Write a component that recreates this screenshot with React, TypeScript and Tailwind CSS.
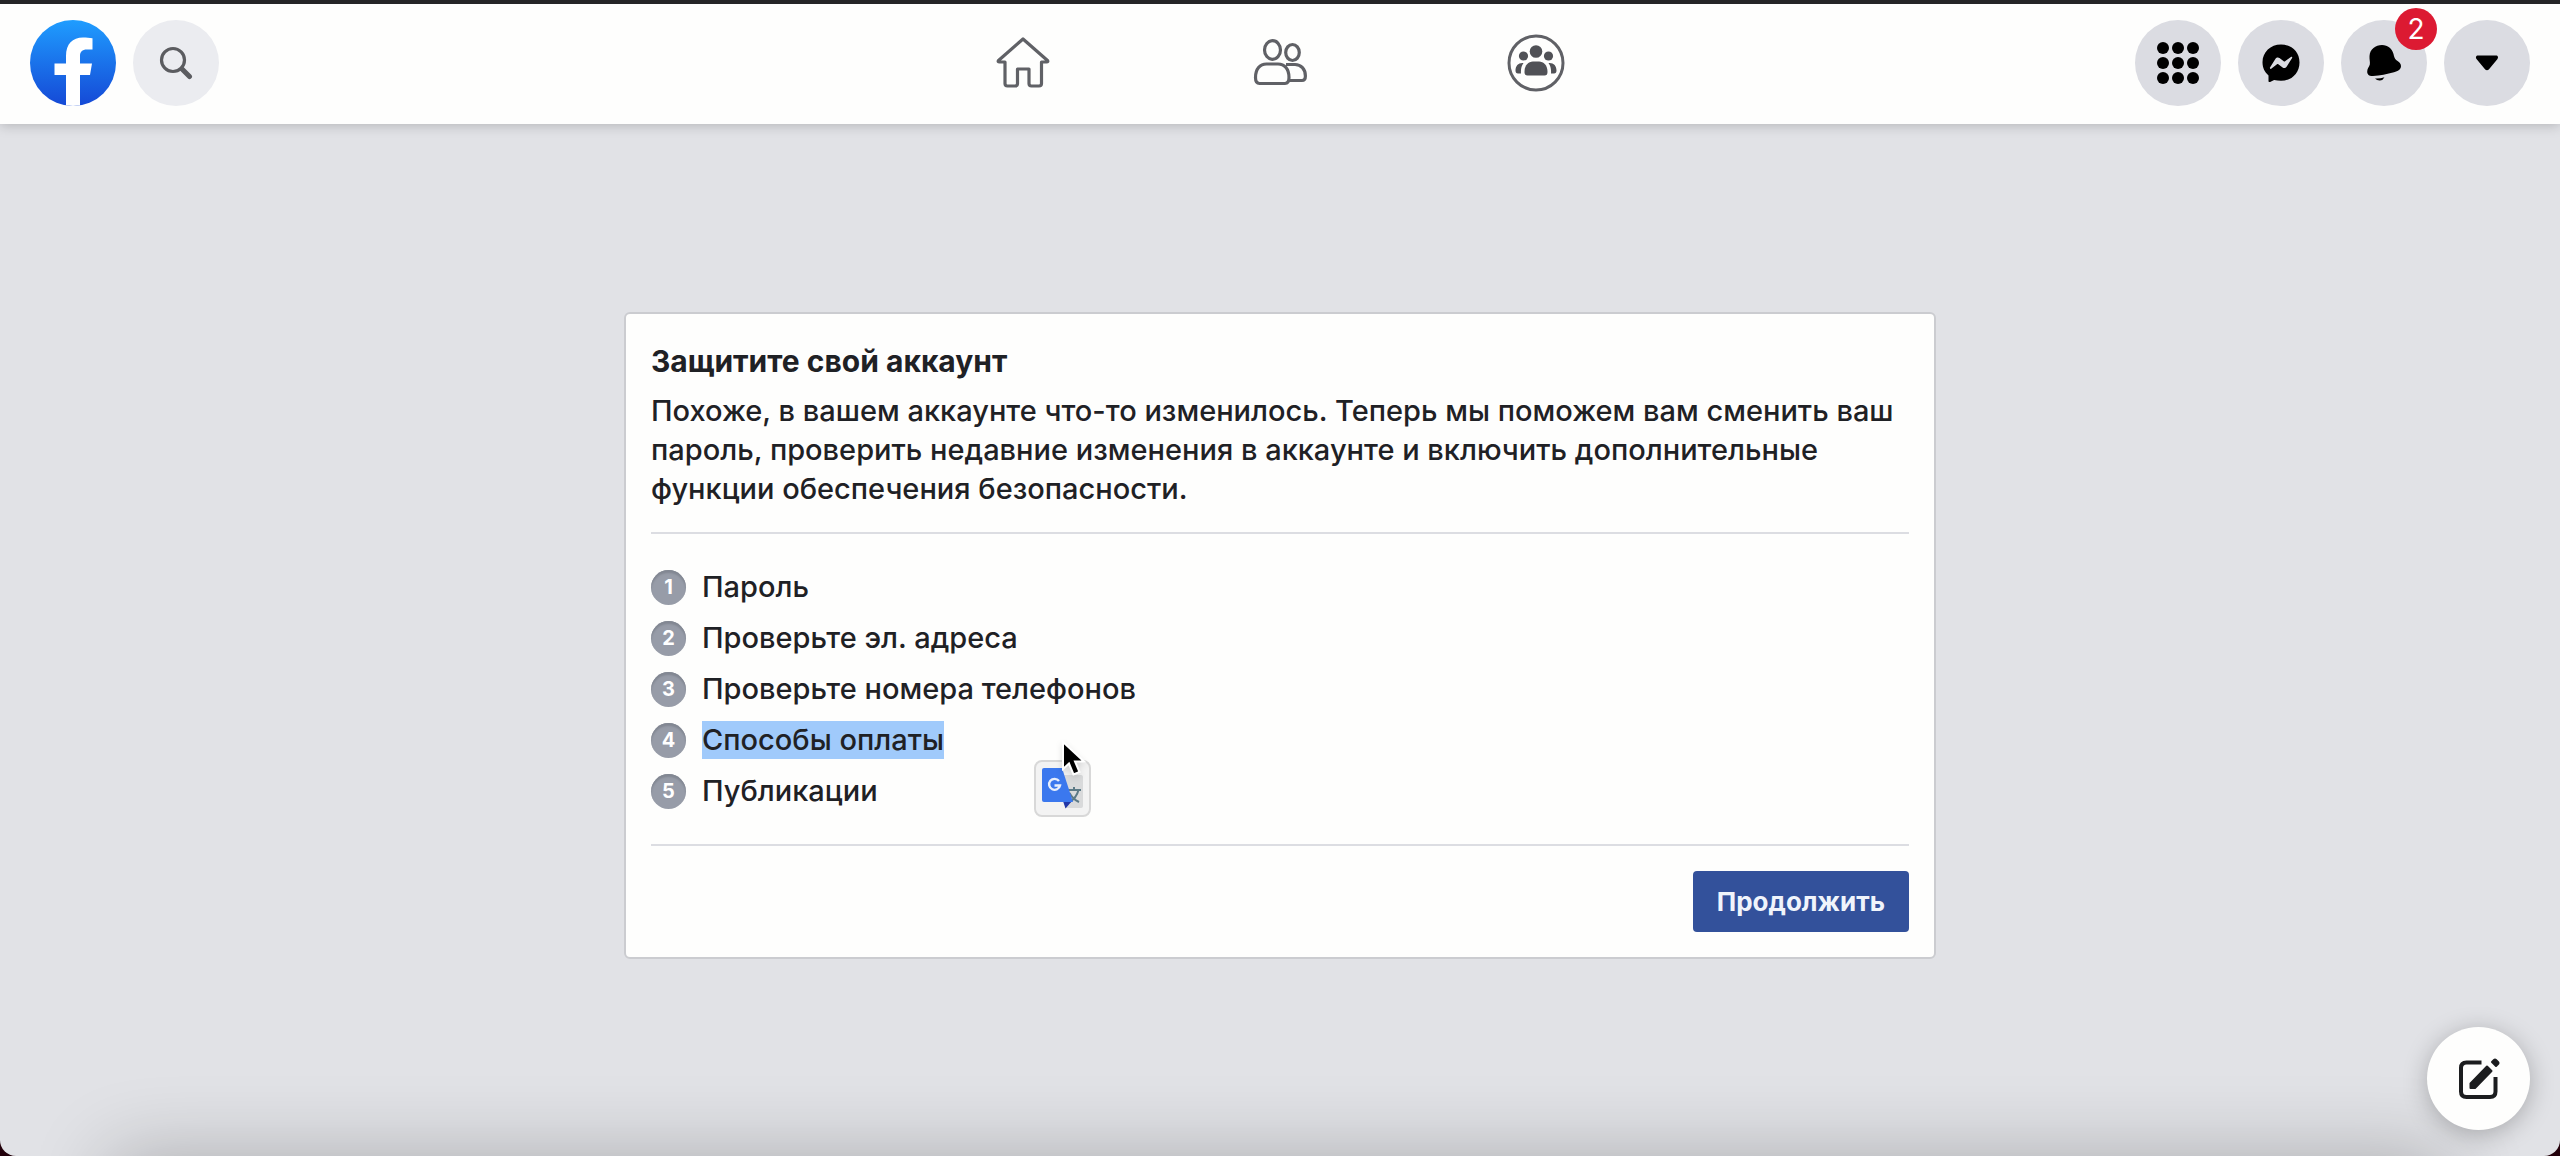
import type { ReactNode } from "react";

const steps = [
  { label: "Пароль" },
  { label: "Проверьте эл. адреса" },
  { label: "Проверьте номера телефонов" },
  { label: "Способы оплаты", selected: true },
  { label: "Публикации" },
];

function RoundButton({ label, children }: { label: string; children: ReactNode }) {
  return (
    <button
      type="button"
      aria-label={label}
      className="relative flex size-[86px] items-center justify-center rounded-full bg-[#dbdce2] text-black"
    >
      {children}
    </button>
  );
}

function FacebookLogo() {
  return (
    <svg viewBox="0 0 86 86" className="size-[86px]" aria-hidden="true">
      <defs>
        <linearGradient id="fb-blue" x1="0" y1="0" x2="0" y2="1">
          <stop offset="0" stopColor="#1f9dff" />
          <stop offset="0.5" stopColor="#1a72ea" />
          <stop offset="1" stopColor="#1549d6" />
        </linearGradient>
        <clipPath id="fb-circle">
          <circle cx="43" cy="43" r="43" />
        </clipPath>
      </defs>
      <circle cx="43" cy="43" r="43" fill="url(#fb-blue)" />
      <path
        clipPath="url(#fb-circle)"
        fill="#fff"
        d="M36 86V55H24.500V43.500H36V36c0-12 6.500-18.500 17-18.500 3.500 0 6.500.3 9.500.8V29.500H57c-5 0-7 2.500-7 6.500v7.500h12L60 55H50v31Z"
      />
    </svg>
  );
}

function SearchIcon() {
  return (
    <svg viewBox="0 0 34 34" className="size-[34px]" fill="none" stroke="#5b5c60" aria-hidden="true">
      <circle cx="14" cy="14" r="11.500" strokeWidth="3.200" />
      <path d="M23 23l7.500 7.500" strokeWidth="5" strokeLinecap="round" />
    </svg>
  );
}

function HomeIcon() {
  return (
    <svg viewBox="0 0 56 56" className="size-14" fill="none" stroke="#606166" strokeWidth="3.200" strokeLinejoin="round" aria-hidden="true">
      <path d="M28 4 3.500 25.500Q2.500 27 4.500 27H10V48.500Q10 51 12.500 51H20Q22.500 51 22.500 48.500V34H34V48.500Q34 51 36.500 51H44Q46.500 51 46.500 48.500V27H51.500Q53.500 27 52.500 25.500Z" />
    </svg>
  );
}

function FriendsIcon() {
  return (
    <svg viewBox="0 0 56 56" className="size-14" fill="none" stroke="#606166" strokeWidth="3.200" strokeLinejoin="round" aria-hidden="true">
      <ellipse cx="21.500" cy="15" rx="8" ry="9.300" />
      <ellipse cx="41.500" cy="17.500" rx="6.800" ry="8" />
      <path d="M4.500 42.500C4.500 34 9 29 15.500 29H27c6.500 0 11 5 11 13.500 0 4-1 6-4 6H8.500c-3 0-4-2-4-6Z" />
      <path d="M35 29.500H44C50 29.500 54.400 34 54.400 41c0 3-1 4.500-3.500 4.500H38" />
    </svg>
  );
}

function GroupsIcon() {
  return (
    <svg viewBox="0 0 58 58" className="size-[58px]" fill="#505156" aria-hidden="true">
      <circle cx="29" cy="29" r="27" fill="none" stroke="#606166" strokeWidth="3" />
      <circle cx="29" cy="17.500" r="6.300" />
      <circle cx="16.500" cy="22" r="4.600" />
      <circle cx="41.500" cy="22" r="4.600" />
      <path d="M17.500 38C17.500 31 21.500 27.500 26 27.500h6c4.500 0 8.500 3.500 8.500 10.500 0 2.500-1 3.500-3 3.500h-17c-2 0-3-1-3-3.500Z" />
      <path d="M15.500 29C11 29 8.500 32 8.500 36.500c0 2 .8 3 2.500 3h3c-.3-4 .3-7.500 2.500-10.500ZM42.500 29c4.500 0 7 3 7 7.500 0 2-.8 3-2.500 3h-3c.3-4-.3-7.500-2.500-10.500Z" />
    </svg>
  );
}

function GridIcon() {
  const at = [6, 21, 36];
  return (
    <svg viewBox="0 0 42 42" className="size-[42px]" fill="currentColor" aria-hidden="true">
      {at.map((y) => at.map((x) => <circle key={`${x}-${y}`} cx={x} cy={y} r="6" />))}
    </svg>
  );
}

function MessengerIcon() {
  return (
    <svg viewBox="0 0 38 38" className="size-[38px]" aria-hidden="true">
      <path d="M19 .5C8.500 .5 .5 8 .5 18.300c0 5.400 2.200 10 6 13.100V37c0 1 .8 1.300 1.600 1l4-2c2.200.6 4.500.8 6.900.8 10.500 0 18.500-7.700 18.500-18.400S29.500.5 19 .5Z" />
      <path
        fill="#dbdce2"
        d="m8 23.500 5.500-8.700c.9-1.400 2.700-1.700 4-.7l4.200 3.200c.5.300 1 .3 1.400 0l5.800-4.400c.8-.6 1.800.3 1.200 1.200l-5.500 8.600c-.9 1.400-2.700 1.800-4 .8l-4.300-3.200c-.4-.3-.9-.3-1.300 0l-5.800 4.400c-.8.6-1.800-.4-1.200-1.200Z"
      />
    </svg>
  );
}

function BellIcon() {
  return (
    <svg viewBox="0 0 38 38" className="size-[38px]" fill="currentColor" aria-hidden="true">
      <path d="M4.500 12C5 5 10.500 1 17 1c6 0 10 3.500 11.500 9 .7 3 1 4.500 3 6.200 2.500 1.800 4.500 2.800 4.500 5.800 0 3.500-3 5-7 6.200-7 2-14 3.300-21 3.800-3.500.2-5.800-1-5.800-4.500 0-3 2-4.500 2.600-7 .5-2.500-.5-5-.3-8.500Z" />
      <path d="M10 34.500q5 .3 9.500-1.200-1.500 3-4.500 3.200-3 .2-5-2Z" />
    </svg>
  );
}

function CaretIcon() {
  return (
    <svg viewBox="0 0 24 16" className="h-4 w-6" fill="currentColor" aria-hidden="true">
      <path d="M3 .5h18c2 0 2.700 2.200 1.300 3.700L13.800 14.500c-1 1.100-2.600 1.100-3.600 0L1.700 4.200C.3 2.700 1 .5 3 .5Z" />
    </svg>
  );
}

function ComposeIcon() {
  return (
    <svg viewBox="0 0 42 42" className="size-[42px]" fill="none" stroke="#1c1d1f" strokeLinejoin="round" aria-hidden="true">
      <path d="M23.500 4.500H8.500Q3 4.500 3 10V33.500Q3 39 8.500 39H32Q37.500 39 37.500 33.500V19" strokeWidth="4" />
      <path d="M12.500 30V25.500L29 8.500 33.500 13 17 30Z" fill="#1c1d1f" strokeWidth="2" />
      <path d="M34 4 36 2q1-1 2 0l2 2q1 1 0 2l-2 2Z" fill="#1c1d1f" strokeWidth="2" />
    </svg>
  );
}

function TranslateIcon() {
  return (
    <svg viewBox="0 0 42 44" className="h-11 w-[42px]" aria-hidden="true">
      <path d="M18 8h21q2 0 2 2v29q0 2-2 2H24Z" fill="#d9dadb" />
      <path d="M25 23h14M32 20v3M36.500 23q-2 8-9 12M27.500 26q3 6 9.500 9" fill="none" stroke="#5c7a86" strokeWidth="2" />
      <path d="M21 34h9l-6.500 7.500Z" fill="#2237a8" />
      <path d="M2 1h18l11 34H2Q0 35 0 33V3Q0 1 2 1Z" fill="#3b78ee" />
      <path d="M17 14a5.500 5.500 0 1 0 1 4.500H12.500" fill="none" stroke="#e8effc" strokeWidth="2.400" />
    </svg>
  );
}

function Cursor() {
  return (
    <svg viewBox="0 0 26 38" className="h-[38px] w-[26px] drop-shadow-md" aria-hidden="true">
      <path d="M2 2v27l6-5.500 4.500 11 6-2.500-4.500-10.500H23Z" fill="#000" stroke="#fff" strokeWidth="2" />
    </svg>
  );
}

export default function App() {
  return (
    <div className="bg-[#22000a] font-['Inter',sans-serif] text-[#1f2125]">
      <div className="relative flex min-h-screen flex-col overflow-hidden rounded-b-[16px] border-t-4 border-[#252527] bg-[#e1e2e6]">
        <header className="z-10 grid h-[120px] shrink-0 grid-cols-3 items-center bg-[#fefefd] px-[30px] pb-0.5 shadow-[0_1px_12px_rgba(0,0,0,0.22)]">
          <div className="flex items-center gap-[17px]">
            <a href="#home" aria-label="Facebook">
              <FacebookLogo />
            </a>
            <button type="button" aria-label="Поиск" className="flex size-[86px] items-center justify-center rounded-full bg-[#ebecf0]">
              <SearchIcon />
            </button>
          </div>
          <nav className="flex items-center justify-center gap-[200px]">
            <a href="#feed" aria-label="Главная">
              <HomeIcon />
            </a>
            <a href="#friends" aria-label="Друзья">
              <FriendsIcon />
            </a>
            <a href="#groups" aria-label="Группы">
              <GroupsIcon />
            </a>
          </nav>
          <div className="flex justify-end gap-[17px]">
            <RoundButton label="Меню">
              <GridIcon />
            </RoundButton>
            <RoundButton label="Messenger">
              <MessengerIcon />
            </RoundButton>
            <RoundButton label="Уведомления">
              <BellIcon />
              <span className="absolute -top-3 -right-[10px] flex size-[42px] items-center justify-center rounded-full bg-[#dc1a32] text-[28px] text-white">
                2
              </span>
            </RoundButton>
            <RoundButton label="Аккаунт">
              <CaretIcon />
            </RoundButton>
          </div>
        </header>

        <main className="mx-auto mt-[188px] w-full max-w-[1312px] rounded-md border-2 border-[#cbccd0] bg-[#fefefd] px-[25px] pt-[27px] pb-[25px] text-[29px]">
          <h1 className="text-[30px] leading-10 font-bold">Защитите свой аккаунт</h1>
          <p className="mt-[10px] leading-[39px] font-medium">
            Похоже, в вашем аккаунте что-то изменилось. Теперь мы поможем вам сменить ваш пароль, проверить недавние
            изменения в аккаунте и включить дополнительные функции обеспечения безопасности.
          </p>
          <ol className="mt-6 flex flex-col gap-[13px] border-y-2 border-[#dcdde2] py-[34px] font-medium">
            {steps.map((step, i) => (
              <li key={step.label} className="flex items-center gap-4">
                <span className="flex size-[35px] items-center justify-center rounded-full bg-[#979ca8] text-[20px] font-bold text-white shadow-[inset_0_3px_2px_#828792]">
                  {i + 1}
                </span>
                <span className={step.selected ? "bg-[#a0cafb] leading-[38px]" : "leading-[38px]"}>{step.label}</span>
              </li>
            ))}
          </ol>
          <div className="mt-[25px] flex justify-end">
            <button type="button" className="h-[61px] rounded bg-[#33519b] px-6 text-[26px] font-bold text-[#f0f4fb]">
              Продолжить
            </button>
          </div>
        </main>

        <div className="absolute top-[756px] left-1/2 ml-[-246px]">
          <button
            type="button"
            aria-label="Перевести"
            className="flex size-[57px] items-center justify-center rounded-lg border-2 border-[#d8d8d8] bg-[#f3f3f3]"
          >
            <TranslateIcon />
          </button>
          <span className="absolute -top-5 left-[27px]">
            <Cursor />
          </span>
        </div>

        <div className="pointer-events-none absolute inset-x-[110px] -bottom-40 h-40 shadow-[0_0_80px_rgba(0,0,0,0.24)]" />
        <button
          type="button"
          aria-label="Новое сообщение"
          className="absolute right-[30px] bottom-[26px] flex size-[103px] items-center justify-center rounded-full bg-[#fefefd] shadow-[0_4px_24px_rgba(0,0,0,0.25)]"
        >
          <ComposeIcon />
        </button>
      </div>
    </div>
  );
}
